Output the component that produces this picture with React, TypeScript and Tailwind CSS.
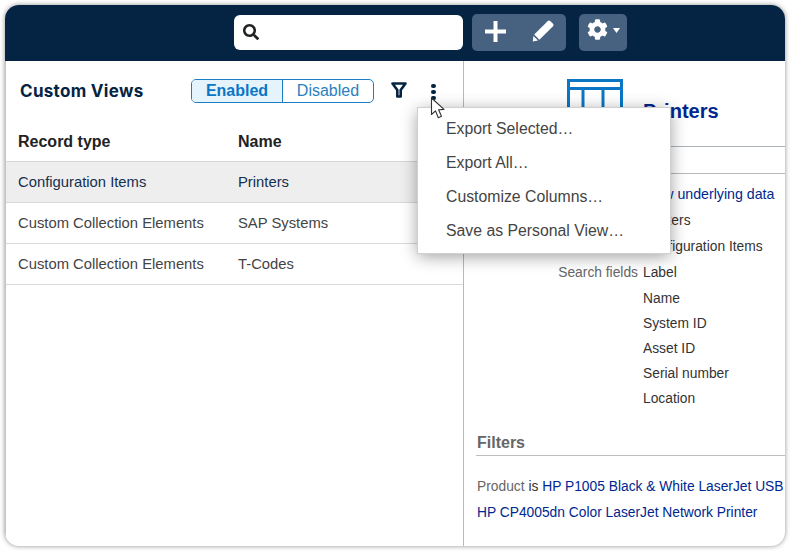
import { FaCog, FaSearch } from "react-icons/fa";

const rows = [
  { type: "Configuration Items", name: "Printers", selected: true },
  { type: "Custom Collection Elements", name: "SAP Systems" },
  { type: "Custom Collection Elements", name: "T-Codes" },
];

const menuItems = ["Export Selected…", "Export All…", "Customize Columns…", "Save as Personal View…"];

const searchFields = ["Name", "System ID", "Asset ID", "Serial number", "Location"];

function Detail({ label, children }: { label: string; children: React.ReactNode }) {
  return (
    <div className="flex h-[26px] items-center">
      <div className="w-[179px] shrink-0 pr-[5px] text-right text-[#666]">{label}</div>
      <div className="whitespace-nowrap text-[#333]">{children}</div>
    </div>
  );
}

export default function App() {
  return (
    <div className="h-[551px] w-[790px] overflow-hidden bg-white p-[5px] font-['Liberation_Sans',sans-serif]">
      <div className="relative flex h-[541px] w-[780px] flex-col overflow-hidden rounded-[14px] bg-white shadow-[0_0_5px_rgba(0,0,0,0.45)]">
        <div className="flex h-[56px] shrink-0 items-center bg-[#052342] pb-[1px] pl-[229px]">
          <div className="flex h-[35px] w-[229px] items-center rounded-[6px] bg-white pb-[2px] pl-[9px] text-[#222]">
            <FaSearch className="text-[16px]" />
          </div>
          <div className="ml-[9px] flex h-[37px] w-[94px] items-start rounded-[5px] bg-[#466280] text-white">
            <svg width="21" height="21" viewBox="0 0 21 21" className="ml-[13px] mt-[7px]">
              <path d="M10.5 0v21M0 10.5h21" stroke="currentColor" strokeWidth="4" />
            </svg>
            <svg width="22" height="22" viewBox="0 0 22 22" className="ml-[26px] mt-[6px]">
              <path d="M15.6 1.2a2 2 0 0 1 2.8 0l2.4 2.4a2 2 0 0 1 0 2.8L7.4 19.8l-5.2-5.2z" fill="currentColor" />
              <path d="M1.4 16l4.6 4.6L.8 21.4z" fill="currentColor" />
            </svg>
          </div>
          <div className="ml-[13px] flex h-[37px] w-[48px] items-start rounded-[5px] bg-[#466280] pl-[8px] text-white">
            <FaCog className="mt-[5px] text-[21px]" />
            <svg width="7" height="5" viewBox="0 0 7 5" className="ml-[5px] mt-[14px]">
              <path d="M0 0h7L3.5 5z" fill="currentColor" />
            </svg>
          </div>
        </div>

        <div className="flex min-h-0 flex-1">
          <div className="w-[459px] shrink-0 border-x border-l-[#c4c4c4] border-r-[#b9b9b9]">
            <div className="flex h-[60px] items-center pl-[14px]">
              <h1 className="mt-[2px] w-[171px] font-['Inter',sans-serif] text-[17px] font-bold tracking-[0.3px] text-[#052342]">Custom Views</h1>
              <div className="flex h-[24px] w-[183px] overflow-hidden rounded-[5px] border border-[#1a7fc4] text-[16px]">
                <div className="flex w-[91px] items-center justify-center border-r border-[#1a7fc4] bg-[#e5f3fd] font-bold text-[#0a76c4]">Enabled</div>
                <div className="flex flex-1 items-center justify-center text-[#2a7fbd]">Disabled</div>
              </div>
              <svg width="16" height="16" viewBox="0 0 16 16" className="mb-[2px] ml-[17px] text-[#052342]">
                <path d="M1.5 1.5h13L9.7 8v6.5H6.3V8z" fill="none" stroke="currentColor" strokeWidth="2.6" strokeLinejoin="round" />
              </svg>
              <div className="ml-[24px] flex flex-col gap-[1.5px] pt-[2px]">
                <span className="h-[4.5px] w-[4.5px] rounded-full bg-[#052342]" />
                <span className="h-[4.5px] w-[4.5px] rounded-full bg-[#052342]" />
                <span className="h-[4.5px] w-[4.5px] rounded-full bg-[#052342]" />
              </div>
            </div>
            <div className="flex h-[41px] items-center border-b border-[#d6d6d6] pl-[12px] pt-[2px] text-[16px] font-bold text-[#222]">
              <div className="w-[220px]">Record type</div>
              <div>Name</div>
            </div>
            {rows.map((r) => (
              <div
                key={r.type + r.name}
                className={`flex h-[41px] items-center border-b border-[#d9d9d9] pl-[12px] text-[14.8px] ${r.selected ? "bg-[#eeeeee] text-[#14304f]" : "text-[#444]"}`}
              >
                <div className="w-[220px]">{r.type}</div>
                <div>{r.name}</div>
              </div>
            ))}
          </div>

          <div className="min-w-0 flex-1 overflow-hidden text-[13.8px]">
            <div className="flex h-[86px] items-start border-b border-[#aab4b8] pl-[103px] pt-[18px]">
              <svg width="56" height="56" viewBox="0 0 56 56" className="shrink-0 text-[#0a76c4]">
                <path d="M1.5 1.5h53v53h-53zM1.5 9.5h53M16 9.5v45M36 9.5v45" fill="none" stroke="currentColor" strokeWidth="3" />
              </svg>
              <h2 className="ml-[20px] mt-[17px] text-[20px] font-bold text-[#00278f]">Printers</h2>
            </div>
            <div className="h-[27px] border-b border-[#b9b9b9]" />
            <div className="pt-[8px]">
              <Detail label="Data">
                <span className="text-[14.2px] text-[#00278f]">View underlying data</span>
              </Detail>
              <Detail label="Name">Printers</Detail>
              <Detail label="Record type">Configuration Items</Detail>
              <Detail label="Search fields">Label</Detail>
              {searchFields.map((f) => (
                <div key={f} className="pl-[179px] leading-[25px] text-[#333]">
                  {f}
                </div>
              ))}
            </div>
            <div className="ml-[12px] mt-[20px] border-b border-[#bdbdbd] pl-[1px] text-[16px] font-bold text-[#666]">Filters</div>
            <div className="ml-[12px] mt-[18px] whitespace-nowrap pl-[1px] leading-[26px] text-[#00278f]">
              <div>
                <span className="text-[#666]">Product</span> <span className="text-[#333]">is</span> HP P1005 Black &amp; White LaserJet USB
              </div>
              <div>HP CP4005dn Color LaserJet Network Printer</div>
            </div>
          </div>
        </div>

        <div className="absolute left-[413px] top-[103px] w-[252px] bg-white pb-[5px] pl-[28px] pt-[4px] text-[15.8px] text-[#444] shadow-[0_3px_16px_rgba(0,0,0,0.4)] outline outline-[#d0d0d0]">
          {menuItems.map((m) => (
            <div key={m} className="flex h-[34px] items-center">
              {m}
            </div>
          ))}
        </div>

        <svg width="16" height="24" viewBox="0 0 16 24" className="absolute left-[425px] top-[92px]">
          <path d="M1.5 1v16.5l4-3.6 2.8 6.8 3.2-1.4-2.9-6.6 5.4-.3z" fill="#fff" stroke="#333" strokeWidth="1.1" strokeLinejoin="round" />
        </svg>
      </div>
    </div>
  );
}
